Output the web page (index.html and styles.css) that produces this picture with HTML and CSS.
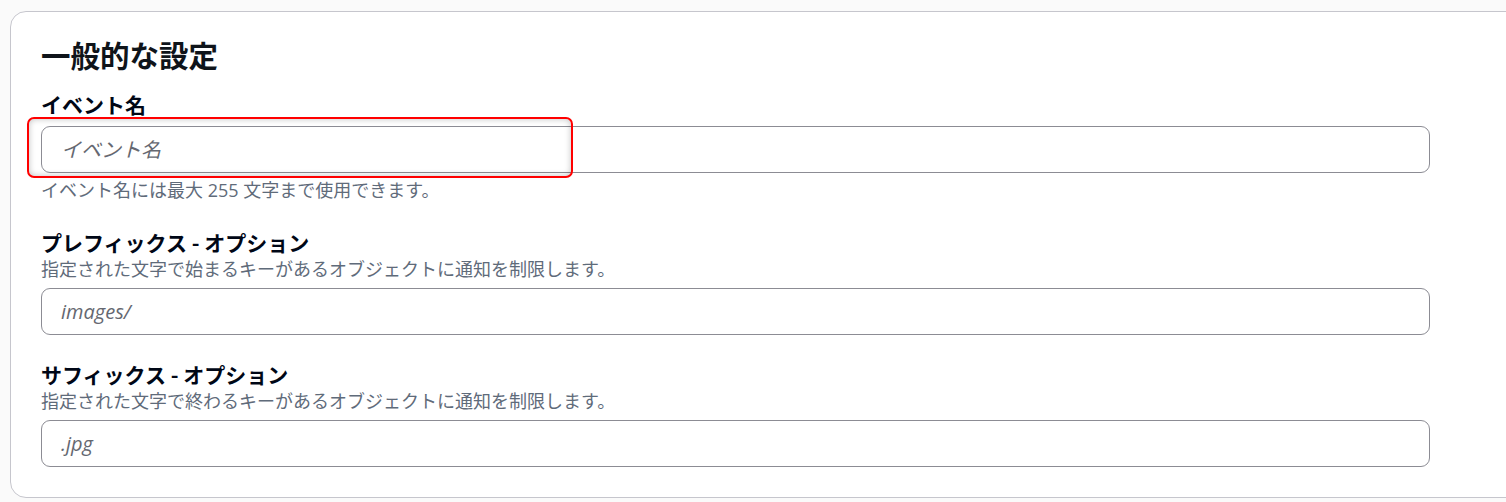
FILE: index.html
```html
<!DOCTYPE html>
<html lang="ja">
<head>
<meta charset="utf-8">
<title>一般的な設定</title>
<link rel="stylesheet" href="styles.css">
</head>
<body>
<section class="card">
  <h2 class="card-title">一般的な設定</h2>
  <div class="field">
    <label class="field-label" for="ev">イベント名</label>
    <div class="control">
      <input id="ev" class="text-input" type="text" placeholder="イベント名">
      <span class="highlight"></span>
    </div>
    <p class="field-hint after">イベント名には最大 255 文字まで使用できます。</p>
  </div>
  <div class="field">
    <label class="field-label" for="pre">プレフィックス - オプション</label>
    <p class="field-hint before">指定された文字で始まるキーがあるオブジェクトに通知を制限します。</p>
    <div class="control">
      <input id="pre" class="text-input" type="text" placeholder="images/">
    </div>
  </div>
  <div class="field">
    <label class="field-label" for="suf">サフィックス - オプション</label>
    <p class="field-hint before">指定された文字で終わるキーがあるオブジェクトに通知を制限します。</p>
    <div class="control">
      <input id="suf" class="text-input" type="text" placeholder=".jpg">
    </div>
  </div>
</section>
</body>
</html>
```

FILE: styles.css
```css
* { box-sizing: border-box; }
html, body { margin: 0; padding: 0; }
body {
  background: #fafafa;
  font-family: "Open Sans", "Noto Sans CJK JP", sans-serif;
  color: #000716;
  overflow: hidden;
  width: 1506px;
  height: 502px;
}
.card {
  margin: 11px 0 0 10px;
  width: 1560px;
  background: #ffffff;
  border: 1px solid #c6c6cd;
  border-radius: 16px;
  padding: 24px 30px 30px 30px;
}
.card-title {
  margin: 0;
  font-family: "Noto Sans CJK JP", sans-serif;
  font-size: 29.5px;
  line-height: 36px;
  font-weight: 700;
  color: #0f141a;
}
.field { display: flex; flex-direction: column; width: 1389px; }
.field + .field { margin-top: 26px; }
.card-title + .field { margin-top: 19px; }
.field-label {
  font-family: "Noto Sans CJK JP", sans-serif;
  font-size: 21px;
  line-height: 26px;
  font-weight: 700;
  color: #000716;
}
.field-hint {
  margin: 0;
  font-size: 18px;
  line-height: 25px;
  color: #5f6b7a;
}
.field-hint.after { margin-top: 5px; }
.field-hint.before { margin-top: 2px; }
.control { position: relative; margin-top: 9px; }
.field-hint.before + .control { margin-top: 6px; }
.text-input {
  display: block;
  width: 100%;
  height: 47px;
  border: 1px solid #8c8c94;
  border-radius: 9px;
  padding: 0 19px;
  font-family: "Open Sans", "Noto Sans CJK JP", sans-serif;
  font-size: 20px;
  color: #000716;
  background: #fff;
  outline: none;
}
.text-input::placeholder {
  color: #656871;
  font-style: italic;
}
.highlight {
  position: absolute;
  left: -14px;
  top: -9px;
  width: 546px;
  height: 61px;
  border: 2px solid #ff0000;
  border-radius: 7px;
  box-shadow: inset 0 0 6px rgba(0, 0, 0, 0.25);
  pointer-events: none;
}
```
